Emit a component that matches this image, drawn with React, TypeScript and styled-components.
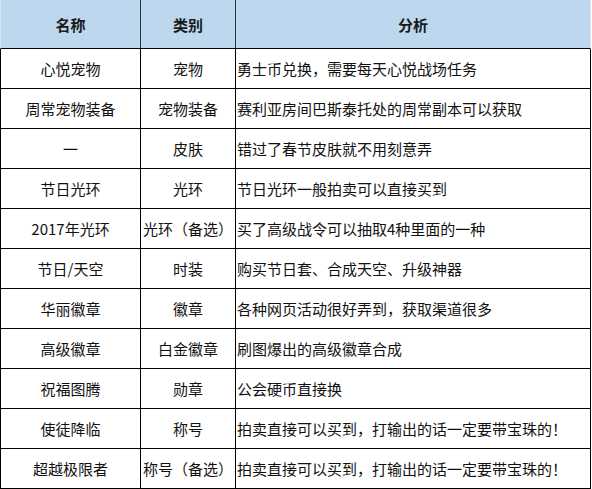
import React from "react";
import styled, { createGlobalStyle, css } from "styled-components";

const GlobalStyle = createGlobalStyle`
  html, body {
    margin: 0;
    padding: 0;
    background: #ffffff;
  }
  body {
    font-family: "Noto Sans CJK SC", "Microsoft YaHei", sans-serif;
  }
  * { box-sizing: border-box; }
`;

const Table = styled.div`
  display: grid;
  grid-template-columns: 141px 95px 355px;
  grid-template-rows: 49px;
  grid-auto-rows: 40px;
  width: 591px;
`;

const HeaderCell = styled.div<{ $first?: boolean; $last?: boolean }>`
  display: flex;
  align-items: center;
  justify-content: center;
  background: #bdd7ee;
  color: #1a1a1a;
  font-size: 15px;
  font-weight: 700;
  border-bottom: 1px solid #000;
  border-right: 1px solid ${(p) => (p.$last ? "#d6e4f2" : "#2a2f36")};
  ${(p) =>
    p.$first &&
    css`
      border-left: 1px solid #d6e4f2;
    `}
`;

const Cell = styled.div<{ $first?: boolean; $left?: boolean }>`
  display: flex;
  align-items: center;
  justify-content: ${(p) => (p.$left ? "flex-start" : "center")};
  padding: ${(p) => (p.$left ? "0 0 0 1px" : "0")};
  color: #111;
  font-size: 15px;
  white-space: nowrap;
  border-bottom: 1px solid #000;
  border-right: 1px solid #000;
  ${(p) =>
    p.$first &&
    css`
      border-left: 1px solid #000;
    `}
`;

const rows: [string, string, string][] = [
  ["心悦宠物", "宠物", "勇士币兑换，需要每天心悦战场任务"],
  ["周常宠物装备", "宠物装备", "赛利亚房间巴斯泰托处的周常副本可以获取"],
  ["一", "皮肤", "错过了春节皮肤就不用刻意弄"],
  ["节日光环", "光环", "节日光环一般拍卖可以直接买到"],
  ["2017年光环", "光环（备选）", "买了高级战令可以抽取4种里面的一种"],
  ["节日/天空", "时装", "购买节日套、合成天空、升级神器"],
  ["华丽徽章", "徽章", "各种网页活动很好弄到，获取渠道很多"],
  ["高级徽章", "白金徽章", "刷图爆出的高级徽章合成"],
  ["祝福图腾", "勋章", "公会硬币直接换"],
  ["使徒降临", "称号", "拍卖直接可以买到，打输出的话一定要带宝珠的！"],
  ["超越极限者", "称号（备选）", "拍卖直接可以买到，打输出的话一定要带宝珠的！"],
];

export default function App() {
  return (
    <>
      <GlobalStyle />
      <Table>
        <HeaderCell $first>名称</HeaderCell>
        <HeaderCell>类别</HeaderCell>
        <HeaderCell $last>分析</HeaderCell>
        {rows.map(([a, b, c], i) => (
          <React.Fragment key={i}>
            <Cell $first>{a}</Cell>
            <Cell>{b}</Cell>
            <Cell $left>{c}</Cell>
          </React.Fragment>
        ))}
      </Table>
    </>
  );
}
